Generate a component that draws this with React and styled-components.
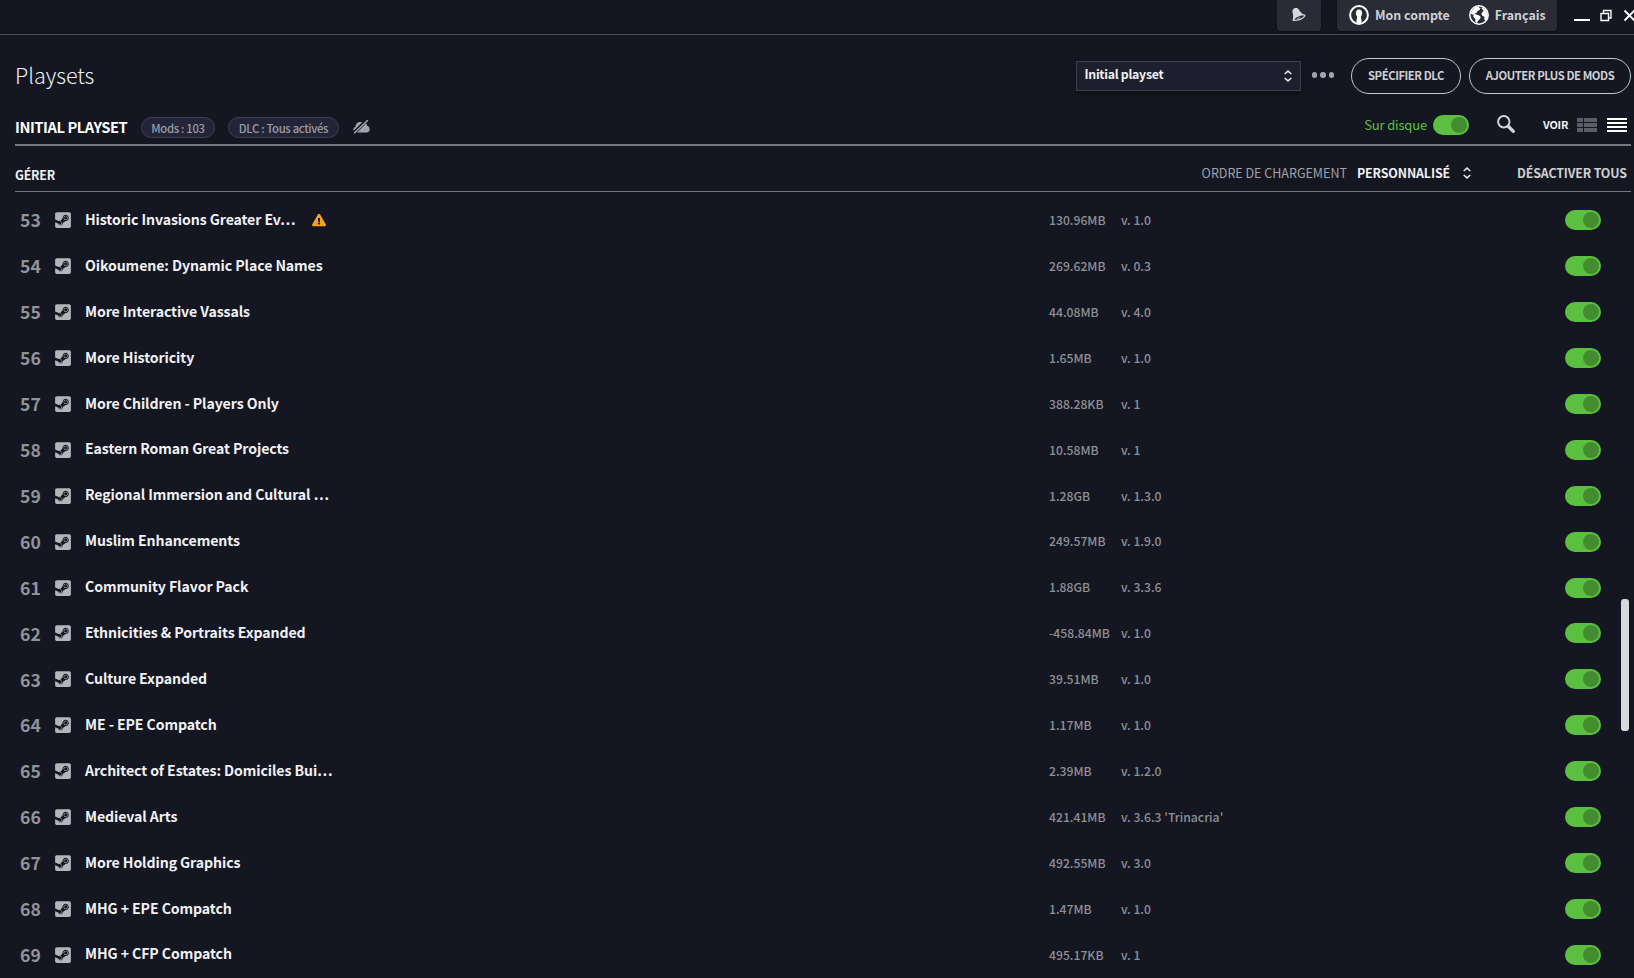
import React from "react";
import styled, { createGlobalStyle } from "styled-components";
import { FaExclamationTriangle, FaSteamSquare } from "react-icons/fa";

const colors = {
  background: "#141722",
  panel: "#292b36",
  field: "#1e1f2e",
  pill: "#232438",
  green: "#5bc040",
  darkGreen: "#438d30",
  white: "#fff",
  text: "#f1f1f3",
  softText: "#cfd0d3",
  grey: "#8e8f95",
  line: "#757780",
};

const GlobalStyle = createGlobalStyle`
  * {
    box-sizing: border-box;
  }

  body {
    margin: 0;
    overflow: hidden;
    background: ${colors.background};
    color: ${colors.text};
    font-family: "Noto Sans CJK SC", "Noto Sans", sans-serif;
    font-weight: 500;
    line-height: 1;
  }

  button {
    font: inherit;
    color: inherit;
    background: none;
    border: 0;
    padding: 0;
  }

  svg {
    display: block;
    flex: none;
  }
`;

const Window = styled.div`
  display: flex;
  flex-direction: column;
  width: 1634px;
  height: 978px;
  overflow: hidden;
  white-space: nowrap;
`;

const TitleBar = styled.header`
  display: flex;
  flex: none;
  justify-content: flex-end;
  height: 35px;
  border-bottom: 1px solid #4b4b58;
`;

const TitleBox = styled.div`
  display: flex;
  align-items: center;
  width: ${({ $width }) => $width}px;
  height: 31px;
  padding: 0 0 1px ${({ $inset }) => $inset}px;
  margin-right: 16px;
  border-radius: 0 0 4px 4px;
  background: ${colors.panel};
  box-shadow: 0 1px 3px rgba(0, 0, 0, 0.5);
`;

const TitleLabel = styled.span`
  margin: 0 19px 0 6px;
  font-size: 12.4px;
  font-weight: 700;
  color: ${colors.softText};
`;

const WindowButtons = styled.div`
  display: flex;
  gap: 10px;
  width: 60px;
  margin-left: 1px;
  padding-top: 9px;
  overflow: hidden;
`;

const PageHead = styled.div`
  display: flex;
  flex: none;
  align-items: center;
  height: 82px;
  padding: 0 3px 0 15px;
`;

const PageTitle = styled.h1`
  flex: 1;
  margin: 0;
  padding-bottom: 2px;
  font-size: 21.5px;
  font-weight: 300;
`;

const Select = styled.div`
  display: flex;
  align-items: center;
  justify-content: space-between;
  width: 225px;
  height: 30px;
  padding: 0 8px 1px 8px;
  border: 1px solid #3d3f4c;
  background: ${colors.field};
  box-shadow: 0 2px 5px rgba(0, 0, 0, 0.45);
  font-size: 12.3px;
  font-weight: 700;
  letter-spacing: -0.27px;

  span {
    padding-bottom: 2px;
  }
`;

const Dots = styled.div`
  display: flex;
  gap: 3px;
  margin: 0 17px 2px 11px;

  i {
    width: 5.5px;
    height: 5.5px;
    border-radius: 50%;
    background: #a3a4aa;
  }
`;

const RoundButton = styled.button`
  width: ${({ $width }) => $width}px;
  height: 36px;
  margin-left: ${({ $gap = 0 }) => $gap}px;
  border: 1px solid #c5c6ca;
  border-radius: 18px;
  font-size: 11.3px;
  font-weight: 700;
  letter-spacing: -0.45px;
  color: ${colors.softText};
`;

const PlaysetBar = styled.div`
  display: flex;
  flex: none;
  align-items: flex-start;
  height: 29px;
  margin: 0 3px 0 15px;
  border-bottom: 2px solid ${colors.line};
`;

const PlaysetName = styled.h2`
  width: 126px;
  margin: 0;
  padding-top: 3px;
  font-size: 14.7px;
  font-weight: 700;
  letter-spacing: -0.44px;
  color: ${colors.white};
`;

const Pill = styled.span`
  width: ${({ $width }) => $width}px;
  height: 21px;
  margin-right: 13px;
  border: 1px solid #40414f;
  border-radius: 11px;
  background: ${colors.pill};
  color: #9b9ca5;
  font-size: 11.3px;
  letter-spacing: -0.33px;
  line-height: 20px;
  text-align: center;
`;

const CloudOff = styled.svg`
  margin: 3px 0 0 1px;
`;

const BarTools = styled.div`
  display: flex;
  align-items: center;
  height: 16px;
  margin-left: auto;
`;

const OnDisk = styled.span`
  margin-right: 6px;
  padding-bottom: 2px;
  font-size: 13px;
  font-weight: 400;
  letter-spacing: -0.17px;
  color: ${colors.green};
`;

const Toggle = styled.button`
  display: flex;
  flex: none;
  justify-content: flex-end;
  width: 36px;
  height: 20px;
  padding: 2px;
  border-radius: 10px;
  background: ${colors.green};

  &::after {
    content: "";
    width: 16px;
    height: 16px;
    border-radius: 50%;
    background: ${colors.darkGreen};
  }
`;

const SearchSlot = styled.span`
  margin: 0 28px;
  padding-bottom: 2px;
`;

const ViewLabel = styled.span`
  width: 34px;
  padding-bottom: 1px;
  font-size: 10.9px;
  font-weight: 700;
  letter-spacing: -0.2px;
`;

const ViewIcons = styled.span`
  display: flex;
  gap: 10px;
  margin-right: 4px;
`;

const ListHead = styled.div`
  display: flex;
  flex: none;
  align-items: center;
  height: 46px;
  margin: 0 3px 0 15px;
  padding-top: 9px;
  border-bottom: 1px solid ${colors.line};
  font-size: 12.4px;
  font-weight: 700;
`;

const Manage = styled.span`
  flex: 1;
  padding-top: 5px;
  letter-spacing: -0.2px;
`;

const Order = styled.span`
  margin-right: 10px;
  font-size: 12.5px;
  font-weight: 400;
  color: #a0a1a6;
`;

const OrderValue = styled.span`
  margin-right: 13px;
  letter-spacing: -0.12px;
`;

const DisableAll = styled.span`
  width: 110px;
  margin: 0 4px 0 46px;
  letter-spacing: -0.15px;
  color: ${colors.softText};
`;

const ListArea = styled.div`
  display: flex;
  flex: 1;
  min-height: 0;
  padding-right: 5px;
`;

const ModList = styled.ul`
  flex: 1;
  margin: 0;
  padding: 5.3px 0 0 20px;
  list-style: none;
`;

const ModRow = styled.li`
  display: grid;
  grid-template-columns: 34.4px 30.6px 964px 72px 444px 36px;
  align-items: center;
  height: 45.92px;
`;

const Position = styled.span`
  font-size: 17.6px;
  font-weight: 700;
  color: #92939a;
`;

const ModName = styled.span`
  display: flex;
  align-items: center;
  gap: 17px;
  font-size: 14.1px;
  font-weight: 700;
  letter-spacing: -0.08px;
  color: ${colors.text};

  span {
    padding-bottom: 2.6px;
  }
`;

const Detail = styled.span`
  font-size: 12.2px;
  color: ${colors.grey};
`;

const ScrollTrack = styled.div`
  width: 8px;
  padding-top: 407px;
`;

const ScrollThumb = styled.div`
  height: 132px;
  border-radius: 3px;
  background: #d9d9d9;
`;

const BellIcon = () => (
  <svg width="16" height="16" viewBox="0 0 16 16">
    <path
      d="M2 2.4C3.6.4 6.4.6 7.800 2.400 9.200 4.200 9.700 6.300 14.200 7.800 15.600 10.400 8.500 14.700 2.100 14 .9 13.300 2.700 10.500 2 7.500 1.600 5.500.9 4 2 2.400z"
      fill="#d6d7da"
    />
    <path
      d="M3.400 12.700c1.600-2.600 6.800-4.700 9.700-4.100-.3 2-5.800 4.700-9.700 4.100z"
      fill="#292b36"
    />
    <path d="M6 12.300c.2-1.500 2.500-2.500 3.600-1.500" fill="#d6d7da" />
  </svg>
);

const AccountIcon = () => (
  <svg width="20" height="20" viewBox="0 0 20 20">
    <circle cx="10" cy="10" r="8.900" fill="none" stroke="#fff" strokeWidth="2" />
    <ellipse cx="10" cy="8.200" rx="3.100" ry="3.700" fill="#fff" />
    <path d="M8 10h4v3l.6 2.500-.6 3.500H8l-.6-3.500L8 13z" fill="#fff" />
  </svg>
);

const GlobeIcon = () => (
  <svg width="20" height="20" viewBox="0 0 20 20">
    <circle cx="10" cy="10" r="9.200" fill="none" stroke="#fff" strokeWidth="1.500" />
    <path
      d="M3 5.500 6.500 2l4-.8-.4 1.700 1.500.4-1.300 2-2 .8-.6 1.600-2 .7 1.400 1.200 2.700.6 2 1.700-1 2.300-1.800 1.500-.8 2.600-1.700-1.300-.2-3-2-2.300.2-1.700L1.500 8.500z"
      fill="#fff"
    />
    <path
      d="M12.500 2l4 2.300 2.300 4.500-.2 3.500-2.100 3.200-1.300-1.200.3-2.500-2.300-1-.8-2.300 1.300-1.800 1-1.500-1.700-1.200z"
      fill="#fff"
    />
  </svg>
);

const Chevrons = () => (
  <svg width="8" height="12" viewBox="0 0 8 12">
    <path
      d="M.7 4 4 1.100 7.300 4M.7 8 4 10.900 7.300 8"
      fill="none"
      stroke="#e8e8ea"
      strokeWidth="1.500"
    />
  </svg>
);

const mods = [
  ["Historic Invasions Greater Ev…", "130.96MB", "v. 1.0", true],
  ["Oikoumene: Dynamic Place Names", "269.62MB", "v. 0.3"],
  ["More Interactive Vassals", "44.08MB", "v. 4.0"],
  ["More Historicity", "1.65MB", "v. 1.0"],
  ["More Children - Players Only", "388.28KB", "v. 1"],
  ["Eastern Roman Great Projects", "10.58MB", "v. 1"],
  ["Regional Immersion and Cultural …", "1.28GB", "v. 1.3.0"],
  ["Muslim Enhancements", "249.57MB", "v. 1.9.0"],
  ["Community Flavor Pack", "1.88GB", "v. 3.3.6"],
  ["Ethnicities & Portraits Expanded", "-458.84MB", "v. 1.0"],
  ["Culture Expanded", "39.51MB", "v. 1.0"],
  ["ME - EPE Compatch", "1.17MB", "v. 1.0"],
  ["Architect of Estates: Domiciles Bui…", "2.39MB", "v. 1.2.0"],
  ["Medieval Arts", "421.41MB", "v. 3.6.3 'Trinacria'"],
  ["More Holding Graphics", "492.55MB", "v. 3.0"],
  ["MHG + EPE Compatch", "1.47MB", "v. 1.0"],
  ["MHG + CFP Compatch", "495.17KB", "v. 1"],
];

const App = () => {
  return (
    <>
      <GlobalStyle />
      <Window>
        <TitleBar>
          <TitleBox $width={44} $inset={14}>
            <BellIcon />
          </TitleBox>
          <TitleBox $width={220} $inset={12}>
            <AccountIcon />
            <TitleLabel>Mon compte</TitleLabel>
            <GlobeIcon />
            <TitleLabel>Français</TitleLabel>
          </TitleBox>
          <WindowButtons>
            <svg width="16" height="13" viewBox="0 0 16 13">
              <path d="M0 11h16" stroke="#fff" strokeWidth="2" />
            </svg>
            <svg width="12" height="13" viewBox="0 0 12 13">
              <path
                d="M1 4.500h7.500v7H1zM3.500 4V1.500h7.500V9H9"
                fill="none"
                stroke="#fff"
                strokeWidth="1.400"
              />
            </svg>
            <svg width="14" height="13" viewBox="0 0 14 13">
              <path d="m2.500 1.500 10 10m0-10-10 10" stroke="#fff" strokeWidth="1.900" />
            </svg>
          </WindowButtons>
        </TitleBar>

        <PageHead>
          <PageTitle>Playsets</PageTitle>
          <Select>
            <span>Initial playset</span>
            <Chevrons />
          </Select>
          <Dots>
            <i />
            <i />
            <i />
          </Dots>
          <RoundButton $width={110}>SPÉCIFIER DLC</RoundButton>
          <RoundButton $width={162} $gap={8}>
            AJOUTER PLUS DE MODS
          </RoundButton>
        </PageHead>

        <PlaysetBar>
          <PlaysetName>INITIAL PLAYSET</PlaysetName>
          <Pill $width={74}>Mods : 103</Pill>
          <Pill $width={111}>DLC : Tous activés</Pill>
          <CloudOff width="17" height="14" viewBox="0 0 17 14">
            <path
              d="M4 12.500C-.2 12.500-.8 7.500 2.600 6.700 2.500 2.300 7.500.5 10.200 3.200c3-.6 4.400 1.400 3.900 2.900 3.400.4 3.600 6.400-.7 6.400z"
              fill="#a5a6ad"
            />
            <path d="M.5 13.600 14.500-.4" stroke={colors.background} strokeWidth="3.600" />
            <path d="M1.200 13.300 14.800.2" stroke="#a5a6ad" strokeWidth="1.500" />
          </CloudOff>
          <BarTools>
            <OnDisk>Sur disque</OnDisk>
            <Toggle />
            <SearchSlot>
              <svg width="18" height="18" viewBox="0 0 18 18">
                <circle cx="6.800" cy="6.800" r="5.700" fill="none" stroke="#d3d4d7" strokeWidth="2" />
                <path
                  d="m11.500 11.500 4.800 4.800"
                  stroke="#d3d4d7"
                  strokeWidth="3.300"
                  strokeLinecap="round"
                />
              </svg>
            </SearchSlot>
            <ViewLabel>VOIR</ViewLabel>
            <ViewIcons>
              <svg width="20" height="14" viewBox="0 0 20 14">
                <path
                  d="M0 0h6v4H0zM7 0h13v4H7zM0 5h6v4H0zM7 5h13v4H7zM0 10h6v4H0zM7 10h13v4H7z"
                  fill="#5b5d67"
                />
              </svg>
              <svg width="20" height="14" viewBox="0 0 20 14">
                <path d="M0 0h20v2H0zM0 4h20v2H0zM0 8h20v2H0zM0 12h20v2H0z" fill="#fff" />
              </svg>
            </ViewIcons>
          </BarTools>
        </PlaysetBar>

        <ListHead>
          <Manage>GÉRER</Manage>
          <Order>ORDRE DE CHARGEMENT</Order>
          <OrderValue>PERSONNALISÉ</OrderValue>
          <Chevrons />
          <DisableAll>DÉSACTIVER TOUS</DisableAll>
        </ListHead>

        <ListArea>
          <ModList>
            {mods.map(([name, size, version, outdated], i) => (
              <ModRow key={name}>
                <Position>{53 + i}</Position>
                <FaSteamSquare color="#b4b5b9" size={18} />
                <ModName>
                  <span>{name}</span>
                  {outdated && <FaExclamationTriangle color="#f7a11f" size={14} />}
                </ModName>
                <Detail>{size}</Detail>
                <Detail>{version}</Detail>
                <Toggle />
              </ModRow>
            ))}
          </ModList>
          <ScrollTrack>
            <ScrollThumb />
          </ScrollTrack>
        </ListArea>
      </Window>
    </>
  );
};

export default App;
